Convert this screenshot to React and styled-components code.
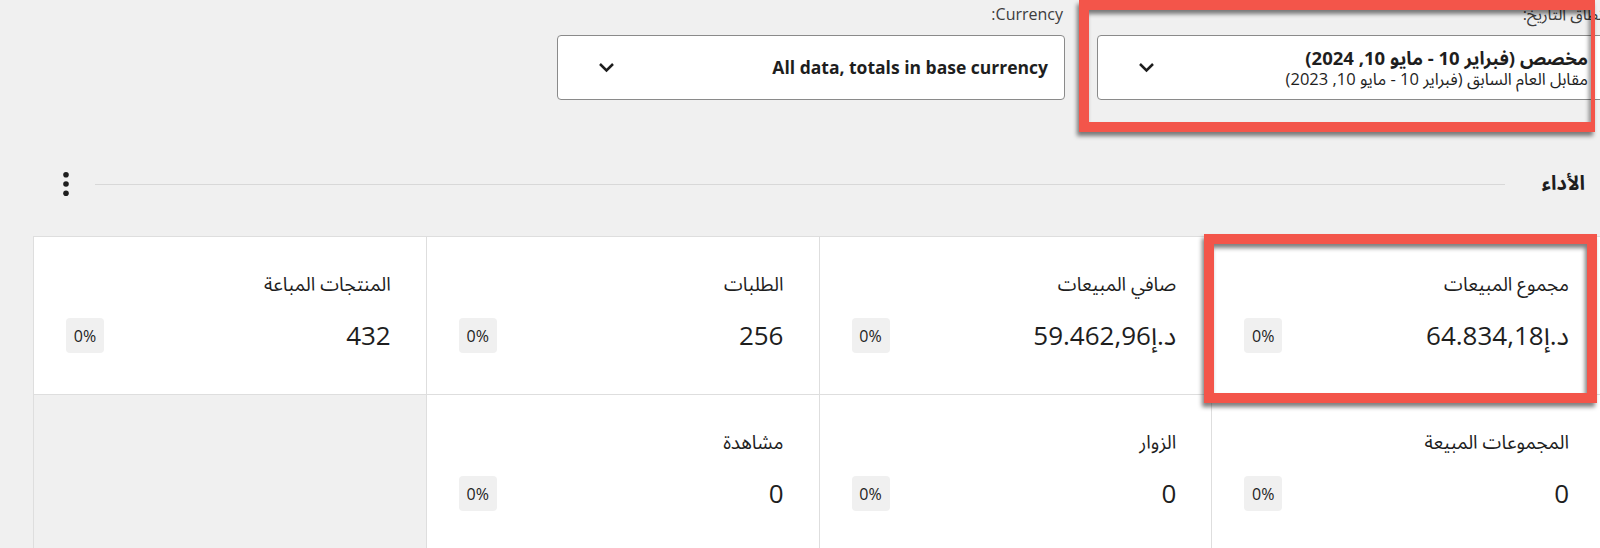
import styled, { createGlobalStyle } from "styled-components";

const GlobalStyle = createGlobalStyle`
  body {
    margin: 0;
    background: #f0f0f0;
    overflow: hidden;
    font-family: "Open Sans", "Noto Sans Arabic", "DejaVu Sans", sans-serif;
    color: #1e1e1e;
  }
`;

const cards = [
  { title: "مجموع المبيعات", value: "د.إ64.834,18" },
  { title: "صافي المبيعات", value: "د.إ59.462,96" },
  { title: "الطلبات", value: "256" },
  { title: "المنتجات المباعة", value: "432" },
  { title: "المجموعات المبيعة", value: "0" },
  { title: "الزوار", value: "0" },
  { title: "مشاهدة", value: "0" },
];

function Chevron() {
  return (
    <svg width="17" height="17" viewBox="0 0 17 17">
      <path d="M2 5 L8.5 11.5 L15 5" fill="none" stroke="#1e1e1e" strokeWidth="2.5" />
    </svg>
  );
}

function Dots() {
  return (
    <svg width="8" height="26" viewBox="0 0 8 26">
      <circle cx="4" cy="3.7" r="2.8" fill="#1e1e1e" />
      <circle cx="4" cy="13" r="2.8" fill="#1e1e1e" />
      <circle cx="4" cy="22.3" r="2.8" fill="#1e1e1e" />
    </svg>
  );
}

export default function App() {
  return (
    <Root>
      <GlobalStyle />
      <Page>
        <Filters>
          <Field>
            <Label>نطاق التاريخ:</Label>
            <Select>
              <SelectText>
                <Main>مخصص (فبراير 10 - مايو 10, 2024)</Main>
                <Sub>مقابل العام السابق (فبراير 10 - مايو 10, 2023)</Sub>
              </SelectText>
              <Chevron />
            </Select>
          </Field>
          <Field>
            <Label>Currency:</Label>
            <Select>
              <SelectText>
                <Main $latin>All data, totals in base currency</Main>
              </SelectText>
              <Chevron />
            </Select>
          </Field>
        </Filters>

        <SectionHeader>
          <Heading>الأداء</Heading>
          <Rule />
          <MenuButton>
            <Dots />
          </MenuButton>
        </SectionHeader>

        <Grid>
          {cards.map((c) => (
            <Card key={c.title}>
              <CardTitle>{c.title}</CardTitle>
              <CardRow>
                <Value>{c.value}</Value>
                <Badge>0%</Badge>
              </CardRow>
            </Card>
          ))}
          <Card $empty />
        </Grid>
      </Page>

      <Marker $left={1079} $top={0} $width={516} $height={132} $right={4} />
      <Marker $left={1204} $top={234} $width={393} $height={169} $right={10} />
    </Root>
  );
}

const Root = styled.div`
  position: relative;
  width: 1600px;
  height: 548px;
  overflow: hidden;
`;

const Page = styled.div`
  direction: rtl;
  width: 1571px;
  margin-left: 33px;
  padding-top: 3px;
`;

const Filters = styled.div`
  display: flex;
  gap: 32px;
  margin-right: -1px;
`;

const Field = styled.div`
  display: flex;
  flex-direction: column;
  width: 508px;
`;

const Label = styled.div`
  font-size: 16px;
  line-height: 22px;
  color: #3c3c3c;
  margin-bottom: 10px;
  padding-right: 2px;
  white-space: nowrap;
`;

const Select = styled.div`
  box-sizing: border-box;
  height: 65px;
  background: #fff;
  border: 1px solid #8a8a8a;
  border-radius: 4px;
  display: flex;
  align-items: center;
  justify-content: space-between;
  padding: 0 16px 0 40px;
`;

const SelectText = styled.div`
  display: flex;
  flex-direction: column;
`;

const Main = styled.div`
  font-size: ${(p) => (p.$latin ? 17.5 : 18.5)}px;
  font-weight: 700;
  line-height: 21px;
`;

const Sub = styled.div`
  font-size: 16.5px;
  line-height: 21px;
`;

const SectionHeader = styled.div`
  display: flex;
  align-items: center;
  height: 40px;
  margin-top: 64px;
  padding: 0 19px 0 29px;
`;

const Heading = styled.h2`
  margin: 0;
  font-size: 20px;
  font-weight: 700;
`;

const Rule = styled.div`
  flex: 1;
  height: 1px;
  background: #d8d8d8;
  margin: 0 37px 0 25px;
`;

const MenuButton = styled.div`
  display: flex;
  align-items: center;
  justify-content: center;
  width: 8px;
  height: 26px;
`;

const Grid = styled.div`
  display: grid;
  grid-template-columns: repeat(4, 1fr);
  margin-top: 32px;
  border-top: 1px solid #dedede;
`;

const Card = styled.div`
  box-sizing: border-box;
  height: 158px;
  background: ${(p) => (p.$empty ? "#f0f0f0" : "#fff")};
  border-left: 1px solid #dedede;
  border-bottom: 1px solid #dedede;
  padding: 34px 35px 0 32px;
`;

const CardTitle = styled.div`
  font-size: 19px;
  line-height: 26px;
`;

const CardRow = styled.div`
  display: flex;
  align-items: center;
  justify-content: space-between;
  margin-top: 21px;
`;

const Value = styled.div`
  font-size: 26px;
  line-height: 35px;
`;

const Badge = styled.div`
  box-sizing: border-box;
  height: 35px;
  min-width: 38px;
  padding: 0 6px;
  display: flex;
  align-items: center;
  justify-content: center;
  background: #f0f0f0;
  border-radius: 4px;
  font-size: 16px;
  direction: ltr;
`;

const Marker = styled.div`
  position: absolute;
  box-sizing: border-box;
  left: ${(p) => p.$left}px;
  top: ${(p) => p.$top}px;
  width: ${(p) => p.$width}px;
  height: ${(p) => p.$height}px;
  border: 10px solid #f3554a;
  border-right-width: ${(p) => p.$right}px;
  filter: drop-shadow(-2px 4px 2px rgba(0, 0, 0, 0.5));
  pointer-events: none;
`;
